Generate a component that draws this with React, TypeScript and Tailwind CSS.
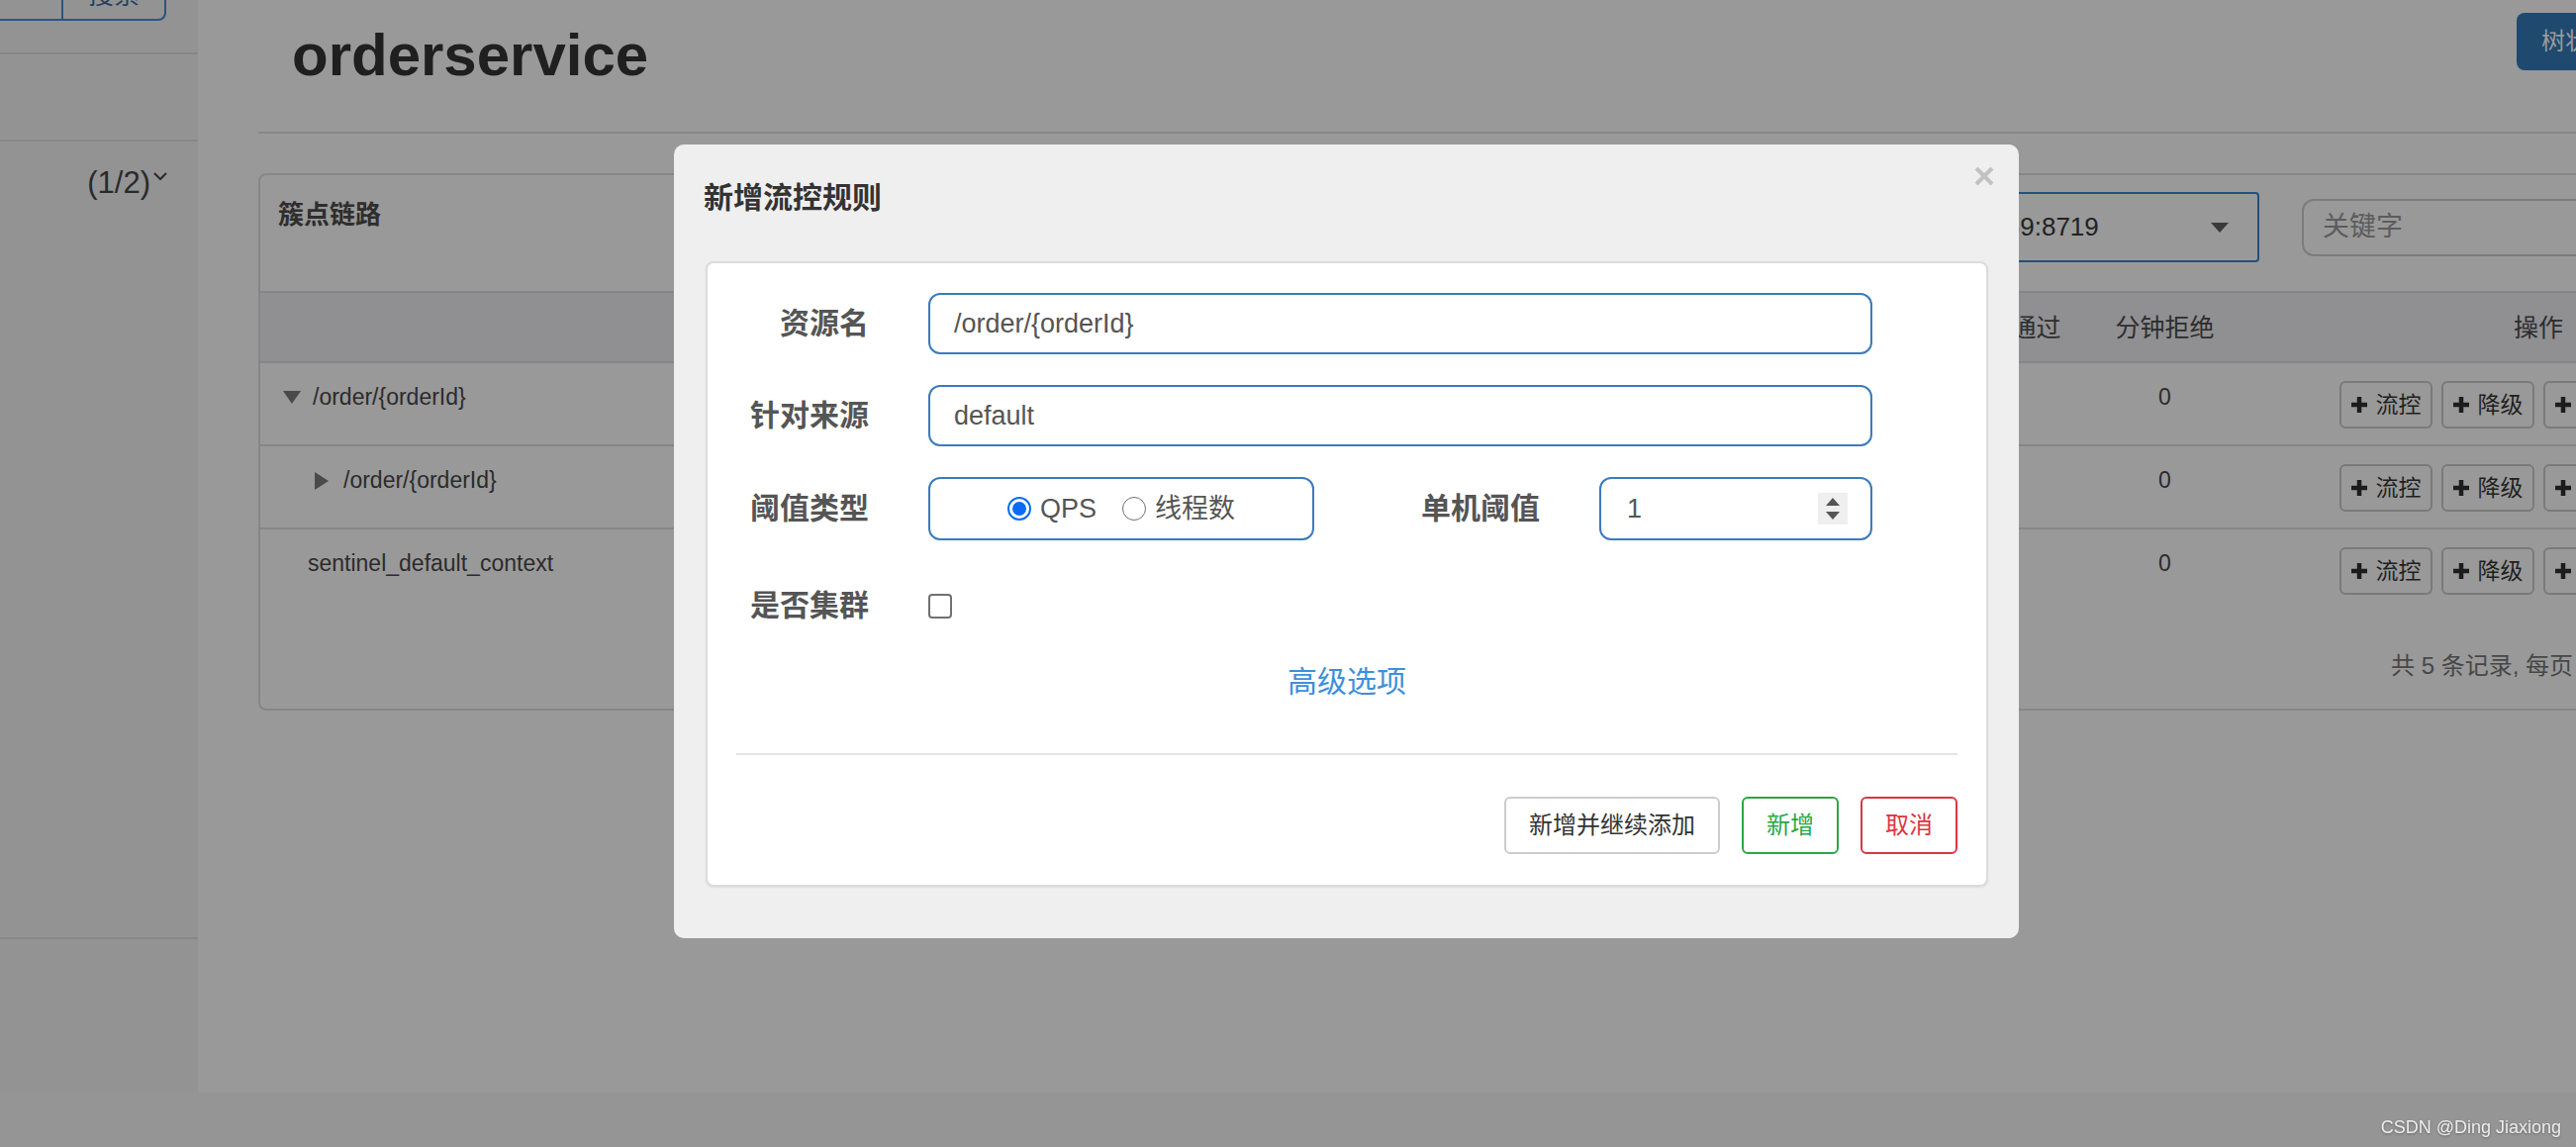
import React from "react";

function Plus() {
  return (
    <svg width="18" height="18" viewBox="0 0 18 18" className="shrink-0">
      <path d="M9 1v16M1 9h16" stroke="#1c1c1c" strokeWidth="4.5" />
    </svg>
  );
}

function Sidebar() {
  return (
    <div className="w-[200px] shrink-0 bg-[#939393] flex flex-col">
      <div className="h-[55px] border-b-2 border-[#878787]">
        <div className="-mt-[30px] h-[51px] flex">
          <div className="w-[64px] border-2 border-l-0 border-[#2c5480]" />
          <div className="w-[106px] -ml-[2px] border-2 border-[#2c5480] rounded-br-[8px] flex items-center justify-center text-[26px] text-[#22405f]">
            搜索
          </div>
        </div>
      </div>
      <div className="h-[88px] border-b-2 border-[#878787]" />
      <div className="flex justify-end pr-[30px] pt-[24px]">
        <span className="text-[31px] leading-[36px] text-[#2a2a2a]">(1/2)</span>
        <svg width="16" height="10" viewBox="0 0 16 10" className="mt-[6px] ml-[2px]">
          <path d="M2 2l6 6 6-6" fill="none" stroke="#2a2a2a" strokeWidth="2" />
        </svg>
      </div>
      <div className="flex-1" />
      <div className="h-[157px] border-t-2 border-[#878787]" />
    </div>
  );
}

const cols = ["通过QPS", "拒绝QPS", "线程数", "平均RT", "分钟通过", "分钟拒绝"];
const rows = [
  { name: "/order/{orderId}", pad: "pl-[23px]", icon: "down" },
  { name: "/order/{orderId}", pad: "pl-[55px]", icon: "right" },
  { name: "sentinel_default_context", pad: "pl-[48px]", icon: "" },
];

function Main() {
  return (
    <div className="flex-1 min-w-0 pl-[61px] overflow-hidden">
      <div className="h-[135px] border-b-2 border-[#878787] flex items-start justify-between">
        <h1 className="pl-[34px] pt-[21px] text-[60px] leading-[69px] font-bold text-[#1f1f1f]">
          orderservice
        </h1>
        <div className="mt-[13px] -mr-[60px] w-[120px] h-[58px] rounded-[8px] bg-[#1f496e] pl-[25px] flex items-center text-[24px] text-[#9a9a9a]">
          树状
        </div>
      </div>

      <div className="mt-[40px] w-[2606px] border-2 border-[#868686] rounded-[8px]">
        <div className="h-[119px] border-b-2 border-[#868686] flex items-start">
          <div className="pl-[18px] pt-[22px] text-[26px] leading-[36px] font-bold text-[#2e2e2e]">
            簇点链路
          </div>
          <div className="ml-auto pr-[115px] pt-[17px] flex items-center gap-[43px]">
            <div className="w-[432px] h-[71px] border-2 border-[#23507e] rounded-[4px] flex items-center justify-between pl-[22px] pr-[29px]">
              <span className="text-[26px] text-[#222]">192.168.31.169:8719</span>
              <svg width="18" height="10" viewBox="0 0 18 10">
                <path d="M0 0h18L9 10z" fill="#3a3a3a" />
              </svg>
            </div>
            <div className="w-[424px] h-[58px] border-2 border-[#7c7c7c] rounded-[12px] pl-[19px] flex items-center text-[27px] text-[#5c5c5c]">
              关键字
            </div>
          </div>
        </div>

        <div className="h-[71px] bg-[#909093] border-b-2 border-[#868686] flex items-start pt-[19px] text-[25px] leading-[33px] text-[#2d2d2d]">
          <div className="flex-1" />
          {cols.map((c) => (
            <div key={c} className="w-[155px] text-center">
              {c}
            </div>
          ))}
          <div className="w-[600px] text-center">操作</div>
        </div>

        {rows.map((r, i) => (
          <div
            key={i}
            className={`h-[84px] flex items-start pt-[18px] text-[23px] leading-[33px] text-[#2b2b2b] ${
              i < 2 ? "border-b-2 border-[#868686]" : ""
            }`}
          >
            <div className={`flex-1 flex items-center ${r.pad}`}>
              {r.icon === "down" && (
                <svg width="18" height="13" viewBox="0 0 18 13" className="mr-[12px]">
                  <path d="M0 0h18L9 13z" fill="#4a4a4a" />
                </svg>
              )}
              {r.icon === "right" && (
                <svg width="14" height="18" viewBox="0 0 14 18" className="mr-[15px]">
                  <path d="M0 0l14 9L0 18z" fill="#4a4a4a" />
                </svg>
              )}
              <span>{r.name}</span>
            </div>
            {cols.map((c) => (
              <div key={c} className="w-[155px] text-center">
                0
              </div>
            ))}
            <div className="w-[600px] flex justify-center gap-[9px]">
              {["流控", "降级", "热点", "授权"].map((b) => (
                <div
                  key={b}
                  className="h-[48px] border-2 border-[#7a7a7a] rounded-[6px] pl-[9px] pr-[9px] flex items-center gap-[8px] text-[23px] text-[#1f1f1f]"
                >
                  <Plus />
                  <span>{b}</span>
                </div>
              ))}
            </div>
          </div>
        ))}

        <div className="h-[97px] flex pl-[2153px] pt-[37px] text-[24px] leading-[33px] text-[#474747] whitespace-nowrap">
          共 5 条记录, 每页 10 条记录
        </div>
      </div>
    </div>
  );
}

function Radio({ checked }: { checked?: boolean }) {
  return checked ? (
    <div className="w-[24px] h-[24px] rounded-full border-[2px] border-[#0a6cf5] flex items-center justify-center">
      <div className="w-[14px] h-[14px] rounded-full bg-[#0a6cf5]" />
    </div>
  ) : (
    <div className="w-[24px] h-[24px] rounded-full border-[1.5px] border-[#6f6f6f] bg-white" />
  );
}

function Label({ children, w = "w-[134px]" }: { children: React.ReactNode; w?: string }) {
  return (
    <div className={`${w} shrink-0 text-right text-[30px] leading-[40px] font-bold text-[#555]`}>
      {children}
    </div>
  );
}

function Modal() {
  return (
    <div className="absolute left-[681px] top-[146px] w-[1359px] h-[802px] bg-[#efefef] rounded-[10px]">
      <div className="h-[118px] relative pl-[30px] pt-[36px]">
        <div className="text-[30px] leading-[36px] font-bold text-[#333]">新增流控规则</div>
        <svg width="22" height="22" viewBox="0 0 22 22" className="absolute right-[24px] top-[21px]">
          <path d="M3 3l16 16M19 3L3 19" stroke="#c2c2c2" strokeWidth="4" />
        </svg>
      </div>

      <div className="mx-[32px] w-[1296px] bg-white border-2 border-[#dcdcdc] rounded-[8px] shadow-[0_1px_2px_rgba(0,0,0,0.08)] px-[29px] pt-[30px] pb-[31px]">
        <div className="flex items-center h-[62px]">
          <Label>资源名</Label>
          <div className="ml-[60px] w-[954px] h-[62px] border-2 border-[#3a7bbf] rounded-[12px] pl-[24px] flex items-center text-[27px] text-[#555]">
            /order/{"{orderId}"}
          </div>
        </div>

        <div className="mt-[31px] flex items-center h-[62px]">
          <Label>针对来源</Label>
          <div className="ml-[60px] w-[954px] h-[62px] border-2 border-[#3a7bbf] rounded-[12px] pl-[24px] flex items-center text-[27px] text-[#555]">
            default
          </div>
        </div>

        <div className="mt-[31px] flex items-center h-[64px]">
          <Label>阈值类型</Label>
          <div className="ml-[60px] w-[390px] h-[64px] border-2 border-[#3a7bbf] rounded-[12px] flex items-center justify-center text-[27px] text-[#555]">
            <Radio checked />
            <span className="ml-[9px]">QPS</span>
            <span className="ml-[26px]">
              <Radio />
            </span>
            <span className="ml-[9px]">线程数</span>
          </div>
          <Label w="w-[228px]">单机阈值</Label>
          <div className="ml-[60px] w-[276px] h-[64px] border-2 border-[#3a7bbf] rounded-[12px] pl-[26px] pr-[23px] flex items-center justify-between text-[27px] text-[#555]">
            <span>1</span>
            <div className="w-[30px] h-[32px] bg-[#efefef] flex flex-col items-center justify-center gap-[6px]">
              <svg width="14" height="8" viewBox="0 0 14 8">
                <path d="M0 8L7 0l7 8z" fill="#555" />
              </svg>
              <svg width="14" height="8" viewBox="0 0 14 8">
                <path d="M0 0h14L7 8z" fill="#555" />
              </svg>
            </div>
          </div>
        </div>

        <div className="mt-[35px] flex items-center h-[62px]">
          <Label>是否集群</Label>
          <div className="ml-[60px] w-[24px] h-[25px] border-2 border-[#707070] rounded-[4px] bg-white" />
        </div>

        <div className="mt-[26px] text-center text-[30px] leading-[40px] text-[#3d8fd9]">高级选项</div>

        <div className="mt-[52px] h-[2px] bg-[#e5e5e5]" />

        <div className="mt-[42px] flex justify-end gap-[22px] text-[24px]">
          <div className="h-[58px] px-[23px] border-2 border-[#cccccc] rounded-[6px] flex items-center text-[#333]">
            新增并继续添加
          </div>
          <div className="h-[58px] px-[23px] border-2 border-[#28a745] rounded-[6px] flex items-center text-[#28a745]">
            新增
          </div>
          <div className="h-[58px] px-[23px] border-2 border-[#dc3545] rounded-[6px] flex items-center text-[#dc3545]">
            取消
          </div>
        </div>
      </div>
    </div>
  );
}

export default function App() {
  return (
    <div className="relative w-[2603px] h-[1159px] overflow-hidden bg-[#999999] font-['Liberation_Sans','Noto_Sans_CJK_SC',sans-serif] text-[#1f1f1f]">
      <div className="flex h-[1104px]">
        <Sidebar />
        <Main />
      </div>
      <div className="h-[55px] bg-[#959595] flex items-end justify-end pr-[15px] pb-[11px]">
        <span className="text-[18px] leading-[18px] text-[#ececec] drop-shadow-[0_1px_1px_rgba(0,0,0,0.3)]">
          CSDN @Ding Jiaxiong
        </span>
      </div>
      <Modal />
    </div>
  );
}
